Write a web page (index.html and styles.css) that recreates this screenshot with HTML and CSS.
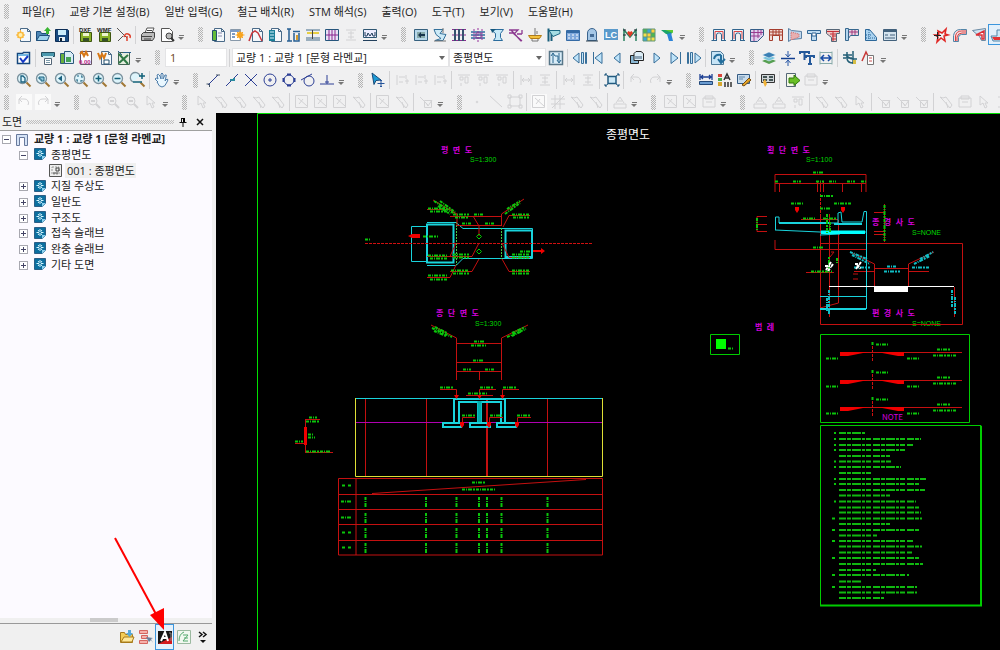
FILE: index.html
```html
<!DOCTYPE html>
<html lang="ko">
<head>
<meta charset="utf-8">
<title>종평면도</title>
<link rel="stylesheet" href="styles.css">
</head>
<body>
<svg class="defs" aria-hidden="true"><defs>
<g id="page"><path d="M4.5 1.5h7l3 3v10h-10z" fill="#f4f8fb" stroke="#4a6a88"/><path d="M11.500 1.500v3h3" fill="none" stroke="#4a6a88"/></g>
<g id="new"><use href="#page"/><circle cx="4.500" cy="8" r="3.500" fill="#ffc23a"/><path d="M4.500 3v10M0 8h9M1.500 5l6 6M7.500 5l-6 6" stroke="#f6b041"/><circle cx="4.500" cy="8" r="2" fill="#fff0b0"/></g>
<g id="open"><path d="M1.500 13.500v-9h4l1 2h6v7z" fill="#4d86b5" stroke="#1e4f7c"/><path d="M1.500 13.500l3-5h10l-2 5z" fill="#9fd3ee" stroke="#1e4f7c"/><path d="M11 7V4H9l3.500-4L16 4h-2v3z" fill="#3ab532"/></g>
<g id="save"><path d="M1.500 2.500h12l1 1v11h-13z" fill="#174a80" stroke="#0b2c55"/><path d="M4 3h8v5H4z" fill="#c9ecfb"/><path d="M5 10h6v4H5z" fill="#e8f1f6"/><path d="M6 11h2v3H6z" fill="#123"/></g>
<g id="gsave"><path d="M2.500 5.500h11v9h-11z" fill="#8bb32a" stroke="#3d5510"/><path d="M5 6h6v3H5z" fill="#eef5cf"/><path d="M5 11h6v3H5z" fill="#36502a"/></g>
<g id="dxf"><use href="#gsave"/><text x="1" y="5" class="tag">DXF</text></g>
<g id="wmf"><use href="#gsave"/><text x="0" y="5" class="tag">WMF</text></g>
<g id="cut"><path d="M1 1l10 10M2 14l5-5" stroke="#555" fill="none"/><path d="M8 10q1-4 4-3 3 1 2 4M8 10l1-2M11 9v5" stroke="#e0402c" stroke-width="1.500" fill="none"/></g>
<g id="print"><path d="M5 6l2-5h7l-2 5" fill="#fff" stroke="#555"/><path d="M1.500 7.500l2-2h11v5l-2 3h-11z" fill="#bbb" stroke="#444"/><path d="M2 9.500h10M4 12h7M7 3.500h5" stroke="#444"/></g>
<g id="preview"><path d="M2.500 1.500h8l3 3v10h-11z" fill="#fff" stroke="#555"/><circle cx="10" cy="9" r="3" fill="#bbb" stroke="#444"/><path d="M12 11l3 3" stroke="#333" stroke-width="2"/></g>
<g id="gbar"><use href="#page"/><path d="M2.500 3.500h4v10h-4z" fill="#64bc39" stroke="#244f70"/><path d="M8 6h4M8 9h4" stroke="#88a"/></g>
<g id="sunTable"><path d="M1.500 2.500h10v11h-10z" fill="#fff" stroke="#89a"/><path d="M1 4h11M3 7h3M3 10h3" stroke="#7d9cc5" stroke-width="2"/><circle cx="11" cy="8" r="3" fill="#ff9d16"/><path d="M11 3.500v9M6.500 8h9M8 5l6 6M14 5l-6 6" stroke="#f6a821"/></g>
<g id="peak"><use href="#page"/><path d="M1 14l3-8 3-2 3 2 4 8" fill="none" stroke="#c8383e" stroke-width="1.500"/></g>
<g id="stripes"><use href="#page"/><path d="M2 3h6v11H2z" fill="#1a7f98"/><path d="M3 5h4M3 8h4M3 11h4" stroke="#d6f5ff"/></g>
<g id="bracket"><path d="M3 2v12M7 4.500h7M8 6v8h5V6M1 14h5M1 2h4" fill="none" stroke="#275f93" stroke-width="1.500"/><path d="M10 8h2v5h-2z" fill="#d59c2c"/></g>
<g id="bars"><path d="M1 3h14M1 13h14M1 11h14" stroke="#456d8a"/><path d="M2 5h12v2H2z" fill="#e7ce42"/><path d="M7.500 3v9" stroke="#444"/></g>
<g id="pgrid"><path d="M1.500 2.500h13v11h-13z" fill="#e8e2f5" stroke="#26557c"/><path d="M2 8h12M8 3v10M5 3v10M11 3v10" stroke="#8a258f"/></g>
<g id="gauge"><path d="M1.500 2.500h13v8h-13z" fill="#eef" stroke="#2e5672"/><path d="M3 5v4h2l1-3 2 3 2-3 1 3h2V5M1 13.500h14" fill="none" stroke="#223f5c"/></g>
<g id="boxArrow"><path d="M1.500 2.500h13v11h-13z" fill="#b8d8ea" stroke="#36617f"/><path d="M4 5h8v6H4z" fill="#8aa"/><path d="M5 8l3-3v2h4v2H8v2z" fill="#17344c"/></g>
<g id="zed"><path d="M2 2.500h9l-3 4 6 1-3 6H3l6-2-5-4z" fill="#cdeaf7" stroke="#34719b"/><path d="M11 1v5M2 14h12" stroke="#777"/></g>
<g id="cols"><path d="M1 2.500h14M1 13.500h14M1 8h14" stroke="#8a2e91"/><path d="M4 2v12M8 2v12M12 2v12" stroke="#35506e" stroke-width="2"/></g>
<g id="hash"><path d="M1 5h14M1 8h14M1 11h14" stroke="#2f6da0" stroke-width="1.500"/><path d="M4 2v12M8 1v14M12 2v12" stroke="#96309a" stroke-dasharray="2 1"/><path d="M6 6h5v5H6z" fill="none" stroke="#873c93"/></g>
<g id="beam"><path d="M1.500 2.500h13l-3 4v4l2 3h-9l2-3v-4z" fill="#c7e9f8" stroke="#2b6c9d"/><path d="M2 2h5l-4 4z" fill="#14567a"/></g>
<g id="slash"><path d="M1 3h9l-4 4 8 7M3 3l10 11M1 6h5M14 3v4M9 7h5" fill="none" stroke="#8c3891" stroke-width="1.300"/></g>
<g id="bowl"><path d="M1.500 8.500h13l-2 3h-9z" fill="#f3c23e" stroke="#b37c14"/><path d="M8 1v8M5 12v2h6v-2M10 4v3" stroke="#777" fill="none"/></g>
<g id="flag"><path d="M2.500 1.500v13M5.500 5v9" stroke="#195f7c" stroke-width="2"/><path d="M3 3.500h11v3l-7 3z" fill="#a5dce2" stroke="#1c6884"/></g>
<g id="tbl"><path d="M1.500 3.500h13v10h-13z" fill="#7fa8dc" stroke="#356aa5"/><path d="M2 5h12" stroke="#356aa5" stroke-width="2"/><path d="M3 8h10M3 11h10" stroke="#fff" stroke-dasharray="2 2"/></g>
<g id="tomb"><path d="M3.500 13.500V6a4.500 4.500 0 0 1 9 0v7.500z" fill="#a5c7e6" stroke="#3b648e"/><path d="M6 7h4v3H6z" fill="#456c96"/><path d="M2 14h12" stroke="#345"/></g>
<g id="lc"><path d="M1 2h14v11H1z" fill="#5a9acb"/><text x="2" y="11" class="lc">LC</text></g>
<g id="heart"><path d="M2 14V3l6 7 6-7v11" fill="none" stroke="#2a8060" stroke-width="1.500"/><path d="M8 10L5 6l1.500-2L8 5l1.500-1L11 6z" fill="#e23b25"/><path d="M1 3h3M12 3h3M1 8h3M12 8h3" stroke="#223"/></g>
<g id="mosaic"><path d="M2 2h12v12H2z" fill="#f5e04b"/><path d="M2 2h4v4H2zM10 6h4v4h-4z" fill="#4bb94e"/><path d="M6 2h4v4H6zM2 10h4v4H2z" fill="#3aa7d9"/><path d="M10 2h4v4h-4zM6 6h4v4H6z" fill="#ffcf3c"/><path d="M2 6h12M2 10h12M6 2v12M10 2v12M2 2h12v12H2z" stroke="#5e9676" fill="none"/></g>
<g id="funnel"><path d="M1 3h12l-2 5-5-1z" fill="#1aa26a"/><path d="M5 3h8v3z" fill="#5ccb34"/><path d="M7 7l4-1 2 8H9z" fill="#2b83d8"/></g>
<g id="arch"><path d="M1.500 13.500h-1M2.500 13.500V2.500h11v11h-3V8q0-2-2-2h-1q-2 0-2 2v5.500z" fill="#ebf4fa" stroke="#31658e"/><path d="M4 12V4.500h8V12" fill="none" stroke="#dc4544"/><path d="M1 13.500h5M10 13.500h5" stroke="#31658e"/></g>
<g id="qgrid"><path d="M1.500 14.500v-12h13v6l-6 6z" fill="#dfd1ee" stroke="#355d88"/><path d="M2 5.500h12M2 9h9M5 3v11M9 3v8M12 3v5" stroke="#9a3a8f"/></g>
<g id="hgrid"><path d="M1.500 2.500h13v11h-3v-5h-7v5h-3z" fill="#f1d8d3" stroke="#a53c2d"/><path d="M2 5h12M5 3v5M8 3v5M11 3v5M2 8h12" stroke="#a53c2d"/></g>
<g id="flare"><path d="M1.500 1.500l3 2 10 1v7l-10 1-3 2z" fill="#c0d8ee" stroke="#597fa3"/><path d="M4 5l8 2v3l-8 3z" fill="#e8afb0" stroke="#d06a6a" stroke-dasharray="1 1"/></g>
<g id="tee"><path d="M1.500 3.500h13v3h-4v7h-5v-7h-4z" fill="#bfdcf2" stroke="#326796"/><path d="M6 6h4v3H6z" fill="#fff" stroke="#326796"/></g>
<g id="rtee"><path d="M1.500 2.500h13v4h-3v8h-5v-4l-5-4z" fill="#edc7c7" stroke="#567"/><path d="M2 4.500h12M5 7h6M7 9h4M7 12h4M8 4v10" stroke="#c42f36"/></g>
<g id="fgrid"><path d="M1.500 1.500h3v12h-3z" fill="#b4d6ef" stroke="#36678e"/><path d="M4.500 2.500h10v6h-8l-2 3z" fill="#e6d6e5" stroke="#36678e"/><path d="M5 5h9M8 3v5M11 3v5" stroke="#a1397a"/></g>
<g id="slope"><path d="M2.500 2.500h4l7 8v3h-11z" fill="#a9d2f0" stroke="#2b6799"/><path d="M3 8h6M3 11h10M6 3v10" stroke="#2b6799" stroke-dasharray="1 1"/></g>
<g id="panel"><path d="M1.500 2.500h13v11h-13z" fill="#d4e3ee" stroke="#42617c"/><path d="M2 4h12" stroke="#42617c" stroke-width="2"/><path d="M3 8h3M8 8h5M3 11h10" stroke="#42617c"/></g>
<g id="star"><path d="M5 4l4 2 4-4-1 5 3 1-4 1 1 5-4-3-4 4 1-5-3-2 4 0z" fill="none" stroke="#e02623" stroke-width="1.500"/><path d="M1 8.500h7M4.500 5v7" stroke="#222"/></g>
<g id="curve"><path d="M1.500 14.500v-6q1-6 7-6h6v5h-5q-3 0-3 3v4z" fill="#f4dfe0" stroke="#5385a8"/><path d="M3.500 14V9q1-5 6-5h5M5 14v-4q1-4 5-4h4" fill="none" stroke="#db4245"/></g>
<g id="wedge"><path d="M1.500 3.500l13-2v12h-4l-2-4z" fill="#cfe5f4" stroke="#6b8aa4"/><path d="M5 8l8-4v8h-2V8z" fill="#fff" stroke="#de3037" stroke-width="1.500"/></g>
<g id="boat"><path d="M1 9h6V3h5v6h4v5H3z" fill="#cee8f8" stroke="#5385a8"/><path d="M2 10h14v3H4z" fill="#e23436"/></g>
<g id="check"><path d="M1.500 3.500h5l1-1h6v11h-12z" fill="#fff" stroke="#16477d" stroke-width="1.500"/><path d="M2 4h11v2H2z" fill="#73b7e2"/><path d="M4 8l3 4 5-6" fill="none" stroke="#1638c4" stroke-width="2"/></g>
<g id="plot"><path d="M1.500 2.500h13v4h-13z" fill="#4a98ad" stroke="#234f60"/><path d="M3 6h10v2H3z" fill="#cfeaf0"/><path d="M4.500 8.500h7v6h-7z" fill="#fff" stroke="#567"/><path d="M6 10.500h4M6 12.500h4" stroke="#7a99a9"/></g>
<g id="pages"><path d="M1.500 3.500h8v10h-8z" fill="#69b13e" stroke="#2b587b"/><path d="M5.500 1.500h6l3 3v9h-9z" fill="#d9edf7" stroke="#2b587b"/><path d="M7 7h5v5H7z" fill="#44a256"/></g>
<g id="num"><path d="M2.500 1.500h11v13h-11z" fill="#fff" stroke="#656"/><path d="M2 4l2-2 2 4 2-4 2 4" fill="none" stroke="#d87714" stroke-width="2"/><text x="1" y="14" class="pk">0.00</text></g>
<g id="wpage"><use href="#page"/><path d="M1 3l2 5 2-4 2 4 2-5" fill="none" stroke="#d87714" stroke-width="2"/><path d="M7 10h5v4H7z" fill="#fff" stroke="#24506f"/></g>
<g id="xl"><path d="M2.500 2.500h11v12h-11z" fill="#e6eee0" stroke="#465"/><path d="M3 4l9 10M12 5l-9 8" stroke="#2f7945" stroke-width="2"/><path d="M7 2.500h8M2 1l4 4" fill="none" stroke="#2d628c"/></g>
<g id="swap"><path d="M1.500 1.500h13v13h-13z" fill="#d9edf8" stroke="#577688" stroke-width="1.500"/><path d="M5 13V4M3 6l2-3 2 3M11 3v9M9 10l2 3 2-3M7 6h3v4" stroke="#28658d" fill="none"/></g>
<path id="p1" d="M1 8l6-5v10zM9.500 2.500h2v11h-2zM13.500 2.500h1v11h-1z"/><path id="p2" d="M4 8l7-5.500v11zM2.500 2v12"/><path id="p3" d="M4 8l6-5v10z"/><path id="n3" d="M12 8L6 3v10z"/><path id="n2" d="M11 8L4 2.500v11zM13.500 2v12"/><path id="n1" d="M15 8L9 3v10zM1.500 2.500h1v11h-1zM4.500 2.500h2v11h-2z"/>
<g id="home"><path d="M1.500 5.500h8v8h-8z" fill="#8ab7d3" stroke="#222"/><path d="M5 3.500l2-2h5l2.500 2v7h-9.500z" fill="#ddeef7" stroke="#222"/><path d="M6 6h7v3H6z" fill="#8da5b7"/></g>
<g id="rot"><path d="M1.500 1.500h9l3 3v10h-12z" fill="#c6e4f6" stroke="#4b7796"/><path d="M4 9q1-5 7-4M11 5v7M8 9l3 4 4-4" fill="none" stroke="#236e9c" stroke-width="2"/></g>
<g id="layers"><path d="M1 11l7-3 7 3-7 3z" fill="#569f52"/><path d="M1 8l7-3 7 3-7 3z" fill="#79c3dc" stroke="#fff" stroke-width=".5"/><path d="M1 5l7-3 7 3-7 3z" fill="#3b80b5" stroke="#fff" stroke-width=".5"/></g>
<g id="mid"><path d="M1 8.500h14" stroke="#123f90" stroke-width="1.500"/><path d="M8 1v5M8 16v-5M5.500 4L8 7l2.500-3M5.500 13L8 10l2.500 3" stroke="#2756a5" fill="none"/></g>
<g id="tt"><path d="M1 4V2h9v2M5.500 2v8M7 8V6h8v2M11 6v8M9 14h4" stroke="#24599b" fill="none" stroke-width="2"/></g>
<g id="dim"><path d="M2 1.500v13M14 1.500v13M2 2.500h12M2 13.500h12" stroke="#8aa"/><path d="M3 8h10M6 5L3 8l3 3M10 5l3 3-3 3" fill="none" stroke="#174ba5" stroke-width="1.500"/></g>
<g id="leaf"><path d="M1 5h9M1 8h9M5 2v6M11 1v13M11 9q-5-1-7-4M11 13q-5 0-6-4M11 9h4" fill="none" stroke="#245f77" stroke-width="1.500"/><path d="M11 10h3v4h-3z" fill="#d6bd45"/></g>
<g id="redn"><path d="M1 11L5 2l3 6" fill="none" stroke="#c83836" stroke-width="1.500"/><path d="M6.500 5.500h6v9h-6z" fill="#fff" stroke="#777"/><path d="M8 8h3M8 11h3" stroke="#c55"/></g>
<g id="lens"><circle cx="6.500" cy="6.500" r="5" fill="#ddf4fb" stroke="#7b929e" stroke-width="1.300"/><path d="M10.500 10.500l4 4" stroke="#a07735" stroke-width="2"/></g>
<g id="z1"><use href="#lens"/><path d="M5 4h2l2 2v4H5z" fill="none" stroke="#1b617f" stroke-width="1.300"/></g>
<g id="z2"><use href="#lens"/><path d="M4 5h5v4H6v-2H4z" fill="#8dc5da" stroke="#1b617f"/></g>
<g id="z3"><use href="#lens"/><path d="M4 6.500l4-3v6z" fill="#1b617f"/></g>
<g id="z4"><use href="#lens"/><path d="M4 4h2M8 4h1v2M9 8v1H7M5 9H4V7" stroke="#1b617f" fill="none"/></g>
<g id="z5"><use href="#lens"/><path d="M3.500 6.500h6M6.500 3.500v6" stroke="#126179" stroke-width="1.500"/></g>
<g id="z6"><use href="#lens"/><path d="M3.500 6.500h6" stroke="#126179" stroke-width="1.500"/></g>
<g id="z7"><path d="M3 10a5 5 0 1 1 7-6" fill="#ddf4fb" stroke="#7b929e" stroke-width="1.300"/><path d="M10.500 10.500l4 4" stroke="#a07735" stroke-width="2"/><path d="M3 10h9M9 4h6M12 1v6" stroke="#126179" stroke-width="1.500"/></g>
<g id="hand"><path d="M4 10L1 7q1-2 3 0L3 3q1-2 3 1l1 3V2q1-2 2 0v5l2-4q2-1 1 2l-1 4 2-2q2 0 0 3-2 5-5 5-3 0-5-5z" fill="#e9f7ff" stroke="#4c7ba8"/></g>
<g id="l1"><path d="M3 13L13 3"/><path d="M1.500 12h3v3M11 3h4" stroke="#456"/></g><g id="l2"><path d="M2 14L14 2"/><path d="M6 8h4v-2" stroke="#2a8aa0" stroke-width="2"/></g><path id="l3" d="M2 2l12 12M14 2L2 14"/><g id="l4"><circle cx="8" cy="8" r="6"/><path d="M6 8h4M8 6v4"/></g><g id="l5"><circle cx="8" cy="8" r="5"/><path d="M6 2.500h4M6 13.500h4M2.500 6v4M13.500 6v4" stroke-width="2"/></g><g id="l6"><circle cx="9" cy="9" r="5"/><path d="M1 8l11-6"/></g><path id="l7" d="M1 12h14M8 3v9M6 10h4"/>
<g id="ptr"><path d="M2 1l9 7-5 .5-2 4z" fill="#1e9bd5" stroke="#1a4b79"/><path d="M11 8v7M7.500 11.500h7M10 9l1-1 1 1M10 14l1 1 1-1" stroke="#24549a" fill="none"/></g>
<g id="fit"><path d="M4 4.500h8v7H4z" fill="#cde9f7" stroke="#235b80" stroke-width="1.500"/><path d="M1 2l3 2M15 2l-3 2M1 14l3-2M15 14l-3-2M1 4V2h2M13 2h2v2M1 12v2h2M13 14h2v-2" fill="none" stroke="#235b80"/></g>
<g id="ruler"><path d="M2 2v6M14 2v6M2 5h12M5 3L3 5l2 2M11 3l2 2-2 2" fill="none" stroke="#1c3f93" stroke-width="1.300"/><path d="M1.500 9.500h13v3h-13z" fill="#6a9bd0" stroke="#23497a"/></g>
<g id="legend"><path d="M1 2h4v3H1z" fill="#d8463b"/><path d="M1 6h4v3H1z" fill="#46a84c"/><path d="M1 10h4v4H1z" fill="#d7a62d"/><path d="M7 8l3-6 3 6M8 6h4M8 10v5M11 10v5M14 10v5" stroke="#333" fill="none" stroke-width="1.500"/></g>
<g id="edit"><path d="M1.500 2.500h12v9h-12z" fill="#c8dced" stroke="#345b84"/><path d="M6 13l7-7 2 2-7 6z" fill="#e4a62a" stroke="#774e15"/><path d="M3 5h6M3 7h4" stroke="#6488aa"/></g>
<g id="sheet"><path d="M1.500 2.500h13v8h-13z" fill="#cfd4d8" stroke="#333"/><path d="M3 5h4M9 5h4M3 8h4M9 8h4" stroke="#455" stroke-width="2"/><path d="M3 10l2-3 2 5-2 3z" fill="#f0b33a"/></g>
<g id="exit"><path d="M2.500 1.500h9v13h-9z" fill="#f3f8e7" stroke="#567"/><path d="M5 6h5V3l6 5.500-6 5V11H5z" fill="#68bf25" stroke="#32780d"/></g>
<path id="d1" d="M3 3v10M5 5h6M5 10h4M12 3v4M11 9h4M13 7v5"/><path id="d2" d="M2 3h12M4 5h3v3H4zM9 5h3v6H9zM5 11v3"/><path id="d3" d="M3 3v10M13 3v10M4 8h8M6 6L4 8l2 2M10 6l2 2-2 2"/><path id="d4" d="M3 3h10M3 13h10M8 4v8M5 6h6M5 10h6"/><path id="d5" d="M3 10V5h5a4 4 0 0 1 4 6M3 5l3-3M3 5l3 3"/><path id="d6" d="M13 10V5H8a4 4 0 0 0-4 6M13 5l-3-3M13 5l-3 3"/><g id="d7"><circle cx="7" cy="7" r="4"/><path d="M10 10l4 4M5 7h4" stroke-width="2"/></g><path id="d8" d="M4 2v9l3-2 2 5 2-1-2-4h3z"/><path id="d9" d="M2 3l3 1 3-1 6 8-2 3-7-8zM8 8l2 6"/><path id="d10" d="M1.500 1.500h12v12h-12zM4 4l9 8M5 10l4-5"/><path id="d11" d="M3 3h10v9H3zM1 1h3v3H1zM12 1h3v3h-3zM1 11h3v3H1zM12 11h3v3h-3z"/><path id="d12" d="M1 5h14M1 10h14M5 1v14M10 1v14M2 14L14 2"/><path id="d13" d="M2 10h12v4H2zM4 9l4-6 4 6M6 7h4"/><path id="d14" d="M2 3l8 8M6.500 6.500h7v7h-7zM8 9l2 3 4-6"/><circle id="d15" cx="8" cy="8" r=".8"/><path id="d16" d="M2 2l12 11"/><path id="d17" d="M2 4h12v9H2zM4 2h8v3H4zM5 8h6"/>
<g id="cad"><path d="M1.500 1.500h11v8l-3 3h-8z" fill="#0b6f9f" stroke="#2d5f86"/><path d="M9 13v-4h4z" fill="#8cd0ee"/><path d="M7 3v7M3.500 6.500h7M5 4l4 5M9 4L5 9" stroke="#d8f7ff"/><circle cx="7" cy="6.500" r="1" fill="#0b6f9f"/></g>
<g id="bridge"><path d="M1.500 13.500v-11h11v11h-3v-8h-5v8z" fill="#d5e2f6" stroke="#68799c"/></g>
<g id="doc"><path d="M1.500 1.500h12v12h-12z" fill="#eee" stroke="#555"/><path d="M4 4h7v7H4z" fill="none" stroke="#999" stroke-dasharray="2 1"/><path d="M8 5h3v3H8zM5 10h5" fill="none" stroke="#444"/></g>
<g id="fold"><path d="M1.500 13.500v-10h4l1 2h7v8z" fill="#f4cd55" stroke="#a77a1b"/><path d="M2 13l3-5h10l-2 5z" fill="#ffe99a" stroke="#a77a1b"/><path d="M9 1h3v3h2l-3.500 4L7 4h2z" fill="#57a9d8"/></g>
<g id="rows"><path d="M1.500 1.500h8v3h-8zM3.500 6.500h6v3h-6zM1.500 11.500h8v3h-8z" fill="#f6b0aa" stroke="#d4655f"/><path d="M8 8l7 1-2 1 2 4-2-3-2 2z" fill="#68819d"/></g>
<g id="acad"><path d="M1 2h14v13H1z" fill="#151515"/><path d="M1 15l14-7v7z" fill="#d21b20"/><path d="M4 12L8 3l3 9M6 9h4" fill="none" stroke="#fff" stroke-width="2"/><path d="M12 4h2v8" fill="none" stroke="#888"/></g>
<g id="excel"><path d="M1.500 1.500h13v13h-13z" fill="#f2f8f1" stroke="#9bb9a0"/><path d="M7 6h5l-5 6h5M8 9h4M3 12q0-7 5-9" fill="none" stroke="#55a96f"/></g>
</defs></svg>

<main class="app">
<header class="bars">
<nav class="menu" aria-label="메뉴"><i class="grip"></i><button>파일(F)</button><button>교량 기본 설정(B)</button><button>일반 입력(G)</button><button>철근 배치(R)</button><button>STM 해석(S)</button><button>출력(O)</button><button>도구(T)</button><button>보기(V)</button><button>도움말(H)</button></nav>

<div class="row">
<div class="set"><i class="grip"></i><button class="b" aria-label="새 파일"><svg><use href="#new"/></svg></button><button class="b" aria-label="열기"><svg><use href="#open"/></svg></button><button class="b" aria-label="저장"><svg><use href="#save"/></svg></button><i class="sep"></i><button class="b" aria-label="DXF 저장"><svg><use href="#dxf"/></svg></button><button class="b" aria-label="WMF 저장"><svg><use href="#wmf"/></svg></button><button class="b" aria-label="자르기"><svg><use href="#cut"/></svg></button><i class="sep"></i><button class="b" aria-label="인쇄"><svg><use href="#print"/></svg></button><button class="b" aria-label="미리보기"><svg><use href="#preview"/></svg></button><button class="more" aria-label="더보기"></button></div>
<div class="set"><i class="grip"></i><button class="b"><svg><use href="#gbar"/></svg></button><button class="b"><svg><use href="#sunTable"/></svg></button><button class="b"><svg><use href="#peak"/></svg></button><button class="b"><svg><use href="#stripes"/></svg></button><button class="b"><svg><use href="#bracket"/></svg></button><button class="b"><svg><use href="#bars"/></svg></button><button class="b"><svg><use href="#pgrid"/></svg></button><button class="b" disabled><svg><use href="#d4"/></svg></button><button class="b"><svg><use href="#gauge"/></svg></button><button class="more" aria-label="더보기"></button></div>
<div class="set"><i class="grip"></i><button class="b"><svg><use href="#boxArrow"/></svg></button><button class="b"><svg><use href="#zed"/></svg></button><button class="b"><svg><use href="#cols"/></svg></button><button class="b"><svg><use href="#hash"/></svg></button><button class="b"><svg><use href="#beam"/></svg></button><button class="b"><svg><use href="#slash"/></svg></button><button class="b"><svg><use href="#bowl"/></svg></button><button class="b"><svg><use href="#flag"/></svg></button><button class="b"><svg><use href="#tbl"/></svg></button><button class="b"><svg><use href="#tomb"/></svg></button><button class="b"><svg><use href="#lc"/></svg></button><button class="b"><svg><use href="#heart"/></svg></button><button class="b"><svg><use href="#mosaic"/></svg></button><button class="b"><svg><use href="#funnel"/></svg></button><button class="more" aria-label="더보기"></button></div>
<div class="set"><i class="grip"></i><button class="b"><svg><use href="#arch"/></svg></button><button class="b"><svg><use href="#arch"/></svg></button><button class="b"><svg><use href="#qgrid"/></svg></button><button class="b"><svg><use href="#hgrid"/></svg></button><button class="b"><svg><use href="#flare"/></svg></button><button class="b"><svg><use href="#tee"/></svg></button><button class="b"><svg><use href="#rtee"/></svg></button><button class="b"><svg><use href="#fgrid"/></svg></button><button class="b"><svg><use href="#slope"/></svg></button><button class="b"><svg><use href="#panel"/></svg></button><button class="more" aria-label="더보기"></button></div>
<div class="set"><i class="grip"></i><button class="b"><svg><use href="#star"/></svg></button><button class="b"><svg><use href="#curve"/></svg></button><button class="b"><svg><use href="#wedge"/></svg></button><button class="b on"><svg><use href="#boat"/></svg></button></div>
</div>

<div class="row">
<div class="set"><i class="grip"></i><button class="b"><svg><use href="#check"/></svg></button><i class="sep"></i><button class="b"><svg><use href="#plot"/></svg></button><button class="b"><svg><use href="#pages"/></svg></button><button class="b"><svg><use href="#num"/></svg></button><button class="b"><svg><use href="#wpage"/></svg></button><button class="b"><svg><use href="#xl"/></svg></button><button class="more" aria-label="더보기"></button></div>
<div class="set"><i class="grip"></i><input class="num" aria-label="번호" value="1"><i class="sep"></i><span class="drop wide"><select aria-label="교량"><option>교량 1 : 교량 1 [문형 라멘교]</option></select></span><span class="drop"><select aria-label="도면"><option>종평면도</option></select></span><button class="b"><svg><use href="#swap"/></svg></button><i class="sep"></i><button class="b"><svg class="nav"><use href="#p1"/></svg></button><button class="b"><svg class="nav"><use href="#p2"/></svg></button><button class="b"><svg class="nav"><use href="#p3"/></svg></button><button class="b"><svg><use href="#home"/></svg></button><button class="b"><svg class="nav"><use href="#n3"/></svg></button><button class="b"><svg class="nav"><use href="#n2"/></svg></button><button class="b"><svg class="nav"><use href="#n1"/></svg></button><i class="sep"></i><button class="b"><svg><use href="#rot"/></svg></button><button class="more" aria-label="더보기"></button></div>
<div class="set"><i class="grip"></i><button class="b"><svg><use href="#layers"/></svg></button><button class="b"><svg><use href="#mid"/></svg></button><button class="b"><svg><use href="#tt"/></svg></button><button class="b"><svg><use href="#dim"/></svg></button><i class="sep"></i><button class="b"><svg><use href="#leaf"/></svg></button><button class="b"><svg><use href="#redn"/></svg></button><button class="more" aria-label="더보기"></button></div>
</div>

<div class="row low">
<div class="set"><i class="grip"></i><button class="b"><svg><use href="#z1"/></svg></button><button class="b"><svg><use href="#z2"/></svg></button><button class="b"><svg><use href="#z3"/></svg></button><button class="b"><svg><use href="#z4"/></svg></button><button class="b"><svg><use href="#z5"/></svg></button><button class="b"><svg><use href="#z6"/></svg></button><button class="b"><svg><use href="#z7"/></svg></button><i class="sep"></i><button class="b"><svg><use href="#hand"/></svg></button><button class="more" aria-label="더보기"></button></div>
<div class="set"><i class="grip"></i><button class="b"><svg class="snap"><use href="#l1"/></svg></button><button class="b"><svg class="snap"><use href="#l2"/></svg></button><button class="b"><svg class="snap"><use href="#l3"/></svg></button><button class="b"><svg class="snap"><use href="#l4"/></svg></button><button class="b"><svg class="snap"><use href="#l5"/></svg></button><button class="b"><svg class="snap"><use href="#l6"/></svg></button><button class="b"><svg class="snap"><use href="#l7"/></svg></button><button class="more" aria-label="더보기"></button></div>
<div class="set"><i class="grip"></i><button class="b"><svg><use href="#ptr"/></svg></button><i class="sep"></i><button class="b" disabled><svg><use href="#d1"/></svg></button><button class="b" disabled><svg><use href="#d1"/></svg></button><button class="b" disabled><svg><use href="#d1"/></svg></button><i class="sep"></i><button class="b" disabled><svg><use href="#d2"/></svg></button><button class="b" disabled><svg><use href="#d2"/></svg></button><button class="b" disabled><svg><use href="#d2"/></svg></button><i class="sep"></i><button class="b" disabled><svg><use href="#d3"/></svg></button><button class="b" disabled><svg><use href="#d4"/></svg></button><i class="sep"></i><button class="b" disabled><svg><use href="#d3"/></svg></button><button class="b" disabled><svg><use href="#d4"/></svg></button><i class="sep"></i><button class="b"><svg><use href="#fit"/></svg></button><i class="sep"></i><button class="b" disabled><svg><use href="#d5"/></svg></button><button class="b" disabled><svg><use href="#d6"/></svg></button><button class="more" aria-label="더보기"></button></div>
<div class="set"><i class="grip"></i><button class="b"><svg><use href="#ruler"/></svg></button><button class="b"><svg><use href="#legend"/></svg></button><button class="b"><svg><use href="#edit"/></svg></button><i class="sep"></i><button class="b"><svg><use href="#sheet"/></svg></button><i class="sep"></i><button class="b"><svg><use href="#exit"/></svg></button><button class="b" disabled><svg><use href="#d17"/></svg></button><button class="more" aria-label="더보기"></button></div>
</div>

<div class="row low">
<div class="set"><i class="grip"></i><button class="b pale" disabled><svg><use href="#d5"/></svg></button><button class="b pale" disabled><svg><use href="#d6"/></svg></button><button class="more" aria-label="더보기"></button></div>
<div class="set"><i class="grip"></i><button class="b" disabled><svg><use href="#d7"/></svg></button><button class="b" disabled><svg><use href="#d7"/></svg></button><button class="b" disabled><svg><use href="#d7"/></svg></button><button class="b" disabled><svg><use href="#d8"/></svg></button><button class="more" aria-label="더보기"></button></div>
<div class="set"><i class="grip"></i><button class="b" disabled><svg><use href="#d8"/></svg></button><button class="b" disabled><svg><use href="#d9"/></svg></button><button class="b" disabled><svg><use href="#d9"/></svg></button><button class="b" disabled><svg><use href="#d9"/></svg></button><button class="b" disabled><svg><use href="#d9"/></svg></button><i class="sep"></i><button class="b" disabled><svg><use href="#d10"/></svg></button><button class="b" disabled><svg><use href="#d10"/></svg></button><button class="b" disabled><svg><use href="#d10"/></svg></button><button class="b" disabled><svg><use href="#d9"/></svg></button><i class="sep"></i><button class="b" disabled><svg><use href="#d10"/></svg></button><button class="b" disabled><svg><use href="#d9"/></svg></button><i class="sep"></i><button class="b" disabled><svg><use href="#d14"/></svg></button><button class="more" aria-label="더보기"></button></div>
<div class="set"><i class="grip"></i><button class="b" disabled><svg><use href="#d15"/></svg></button><button class="b" disabled><svg><use href="#d16"/></svg></button><button class="b" disabled><svg><use href="#d11"/></svg></button><i class="sep"></i><button class="b pale" disabled><svg><use href="#d10"/></svg></button><button class="b" disabled><svg><use href="#d12"/></svg></button><button class="b" disabled><svg><use href="#d9"/></svg></button><button class="b" disabled><svg><use href="#d9"/></svg></button><i class="sep"></i><button class="b" disabled><svg><use href="#d13"/></svg></button><button class="more" aria-label="더보기"></button></div>
<div class="set"><i class="grip"></i><button class="b" disabled><svg><use href="#d10"/></svg></button><button class="b" disabled><svg><use href="#d10"/></svg></button><button class="b" disabled><svg><use href="#d17"/></svg></button><button class="more" aria-label="더보기"></button></div>
<div class="set"><i class="grip"></i><button class="b" disabled><svg><use href="#d13"/></svg></button><button class="b" disabled><svg><use href="#d13"/></svg></button><button class="b" disabled><svg><use href="#d2"/></svg></button><i class="sep"></i><button class="b" disabled><svg><use href="#d9"/></svg></button><button class="b" disabled><svg><use href="#d9"/></svg></button><button class="b" disabled><svg><use href="#d8"/></svg></button><i class="sep"></i><button class="b" disabled><svg><use href="#d14"/></svg></button><button class="b" disabled><svg><use href="#d14"/></svg></button><button class="b" disabled><svg><use href="#d14"/></svg></button><i class="sep"></i><button class="b" disabled><svg><use href="#d9"/></svg></button><button class="b" disabled><svg><use href="#d17"/></svg></button><button class="b" disabled><svg><use href="#d8"/></svg></button><button class="b" disabled><svg><use href="#d4"/></svg></button></div>
</div>
</header>

<div class="work">
<aside class="side">
<div class="side-head"><h2>도면</h2><i class="dots"></i><button aria-label="고정"><svg width="10" height="10"><path d="M3.500 1v4M6.500 1v4M3 1.500h4M1.500 5.500h7M5 6v4" stroke="#111" fill="none"/><path d="M5 1h2v4H5z"/></svg></button><button aria-label="닫기"><svg width="8" height="8"><path d="M1 1l6 6M7 1L1 7" stroke="#111" stroke-width="1.500"/></svg></button></div>
<ul class="tree">
<li class="root"><button class="x minus" aria-label="접기"></button><svg><use href="#bridge"/></svg><span>교량 1 : 교량 1 [문형 라멘교]</span></li>
<li class="one"><button class="x minus" aria-label="접기"></button><svg><use href="#cad"/></svg><span>종평면도</span></li>
<li class="two"><svg><use href="#doc"/></svg><span>001 : 종평면도</span></li>
<li class="one"><button class="x plus" aria-label="펼치기"></button><svg><use href="#cad"/></svg><span>지질 주상도</span></li>
<li class="one"><button class="x plus" aria-label="펼치기"></button><svg><use href="#cad"/></svg><span>일반도</span></li>
<li class="one"><button class="x plus" aria-label="펼치기"></button><svg><use href="#cad"/></svg><span>구조도</span></li>
<li class="one"><button class="x plus" aria-label="펼치기"></button><svg><use href="#cad"/></svg><span>접속 슬래브</span></li>
<li class="one"><button class="x plus" aria-label="펼치기"></button><svg><use href="#cad"/></svg><span>완충 슬래브</span></li>
<li class="one"><button class="x plus" aria-label="펼치기"></button><svg><use href="#cad"/></svg><span>기타 도면</span></li>
</ul>
<div class="split"><i></i></div>
<div class="side-foot"><button class="f" aria-label="폴더"><svg><use href="#fold"/></svg></button><button class="f" aria-label="목록"><svg><use href="#rows"/></svg></button><button class="f on" aria-label="CAD"><svg><use href="#acad"/></svg></button><button class="f" aria-label="Excel"><svg><use href="#excel"/></svg></button><button class="f" aria-label="더보기"><svg><path d="M4 3l3 2.500L4 8M8 3l3 2.500L8 8" fill="none" stroke="#111" stroke-width="1.500"/><path d="M5 11h6l-3 3z" fill="#111"/></svg></button></div>
</aside>

<section class="canvas" aria-label="종평면도">
<svg class="drawing" viewBox="216 113 784 537" preserveAspectRatio="xMinYMin meet">
<path d="M1000 113.500H257.500V650" class="frame"/>
<text x="606" y="139" class="title">종평면도</text>
<g class="mg"><text x="441" y="153">평  면  도</text><text x="436" y="316">종  단  면  도</text><text x="767" y="153">횡  단  면  도</text><text x="872" y="225">종  경  사  도</text><text x="872" y="316">편  경  사  도</text><text x="755" y="330">범  례</text></g>
<text x="882" y="420" class="nt">NOTE</text>
<g class="sc"><text x="470" y="162">S=1:300</text><text x="475" y="326">S=1:300</text><text x="806" y="162">S=1:100</text><text x="912" y="235">S=NONE</text><text x="912" y="326">S=NONE</text></g>

<!-- plan -->
<g class="cy"><path d="M427 226.500H411.500V261.500H427M427 222.500H456L463 228.500H532.500V258.500H463L456 265.500H427M501 258.500H532"/><path d="M427 224.500H453.500V262.500H427zM505.500 230.500H532V257H505.500z" class="w2"/></g>
<path class="gd" d="M456.500 222V265M501.500 228V259"/>
<path class="rdash" d="M365 243.500H593"/>
<path class="rd" d="M433 200L457 214V226M457 216.500H501M457 225.500H501M524 199L501.500 214V226M473 216L479 226V236M427 209.500H450L459 217M450 216.500H459M530 215.500H509L503 227M427 256.500H450L456 243M450 256.500H472L479 243M427 277.500H450L456 265M450 271.500H472L479 259M530 271.500H509L502 259M530 257.500H509L502 243"/>
<path class="rf" d="M408 236l4-2h8v4h-8zM533 250h8v-2l4 3-4 3v-2h-8z"/>
<path class="gr" d="M479 234l2.500 2.500-2.500 2.500-2.500-2.500zM479 249l2.500 2.500-2.500 2.500-2.500-2.500z"/>
<path class="s" d="M365 239.500H371M428 208.500H448M430 211.500H448M453 214.500H469M455 217.500H469M474 214.500H483M462 223.500H471M485 223.500H494M512 214.500H529M513 217.500H529M423 236.500H438M520 251.500H530M428 255.500H448M430 258.500H448M453 254.500H469M453 257.500H469M512 254.500H529M512 257.500H529M428 275.500H448M430 279.500H448M451 270.500H469M453 273.500H469M512 270.500H529M512 273.500H529M434 201L453 213M440 201L455 212M438 206L450 214M505 214L520 203M507 209L520 201"/>

<!-- profile -->
<path class="rd" d="M431 325L456.500 338V380M528 325L501.500 338V380M456 343.500H501M456 362.500H501M456 371.500H501M479.500 371V380M440 389.500H456.500V397M496 389.500H479.500V397M519 389.500H502.500V397M466 395.500H493M365.500 398V476M426.500 398V476M547.500 398V476"/>
<path class="rd w2" d="M487 398V476"/>
<path d="M356 422.500H602" stroke="#b000b0"/>
<path d="M355.500 398V476.500H602.500V398" fill="none" stroke="#dfdf35"/>
<g class="cy"><path d="M356 398.500H602"/><path class="w2" d="M454 422V399H505V422M459 422V402H501V422M478 402V422M481 402V422M443 423H461V427H443zM470 423H490V427H470zM497 423H516V427H497z"/></g>
<path d="M477.500 401h4v21h-4z" fill="#0aa"/>
<path class="rd" d="M475 417.500H462.500V425M503 417.500H489.500V425M531 417.500H517.500V425M305.500 419.500V452.500M305 419.500H320M295 443.500H305M305 452.500H333"/>
<path class="rf" d="M304 427h3v18h-3zM454 395h5l-2.500 4zM477 395h5l-2.500 4zM500 395h5l-2.500 4zM460 422h4v3l-2 3-2-3zM487 422h4v3l-2 3-2-3zM515 422h4v3l-2 3-2-3z"/>
<path class="s" d="M432 328L452 337M435 327L447 333M434 331L446 336M507 337L526 329M512 333L525 327M512 336L522 331M474 341.500H484M471 345.500H486M473 360.500H483M463 369.500H471M485 369.500H494M440 387.500H454M480 387.500H494M503 387.500H517M468 393.500H487M462 415.500H475M490 415.500H502M517 415.500H530M309 417.500H317M306 421.500H319M308 434.500H314M308 437.500H315M295 441.500H303M306 451.500H331M472 482.500H485M462 489.500H495M342 485.500H345M348 485.500H351M341 501.500H351M341 517.500H351M342 532.500H345M348 532.500H351M342 547.500H345M348 547.500H351"/>
<path class="tb" d="M338.500 478.500H602.500V555H338.500zM338 494.500H602M338 509.500H602M338 524.500H602M338 540.500H602M356 478V555M372 493.500L586 479.500"/>
<path class="s" d="M365.500 497v10M365.500 513v10M365.500 528v10M365.500 543v10M426 497v10M426 513v10M426 528v10M426 543v10M456.500 497v10M456.500 513v10M456.500 528v10M456.500 543v10M479 497v10M479 513v10M479 528v10M479 543v10M487 497v10M487 513v10M487 528v10M487 543v10M501.500 497v10M501.500 513v10M501.500 528v10M501.500 543v10M547.500 497v10M547.500 513v10M547.500 528v10M547.500 543v10"/>

<!-- cross section -->
<path class="rd" d="M775 192V174.500H866V192M775 183.500H866M779.500 183V192M817.500 182V192M820.500 182V192M823.500 182V192M842.500 183V192M861.500 183V192M767 216.500H757V231.500H767M757 224.500H767M775 240V249.500H866M801 219.500H838M829.500 214V317M838.500 220V303L820 308M806 272.500H834M884.500 204V242M874 212.500H884M874 231.500H884M874 234.500H884M820.500 215V243M820 243.500H962.500V324.500H820.500V243M874.500 287V264L850 252M908.500 287V264L934 252M874 268.500H908M854 271.500H874M908 271.500H929M954.500 287V317M831 252h3l-4 5M853 274h5M853 279h5"/>
<path class="rdash" d="M820.500 194V215"/>
<path class="rf" d="M795 207h4v3l-2 3-2-3zM841 207h4v3l-2 3-2-3z"/>
<g class="cy"><path d="M775.500 230V217H779V223L838 223V213L841 212L842 222H862L864 211.500H866.500V309M775 230L820 232H866M820 296.500H866M820 235L840 234"/><path class="w2" d="M779 223H829M834 224H862M820 309H866"/></g>
<path d="M821 230.500h44v3.500h-44z" fill="#0ff"/>
<path d="M829 286.500H954" stroke="#fff"/><path d="M874 287h34v5h-34z" fill="#fff"/>
<path class="s" d="M813 172.500H823M775 181.500H779M793 181.500H801M816 181.500H824M829 181.500H836M847 181.500H855M861 181.500H866M820 196H833M820 208.500H831M791 203.500H803M834 203.500H851M803 218.500H815M823 218.500H836M757 218V230M827 214V234M830 222V232M813 247.500H824M811 271.500H832M837 258V264M829 270V256M884.500 205V241"/>
<path class="s c" d="M852 255L870 264M850 252L867 259M914 264L930 256M920 259L933 252M887 266.500H896M884 271.500H900M912 267.500H929M854 267.500H870M829 290V315M827 298V312M952 290V307M955 297V315"/>
<path class="s wh" d="M826 270L831 262M828 271L833 264M825 266h7M855 264L861 264M856 269L861 262M857 265l4 4"/>

<!-- legend and slopes -->
<path class="gr" d="M710.500 334.500h29v20h-29zM820.500 334.500H969.500V422.500H820.500zM820.500 425.500H981V605.500H820.500z"/>
<path class="gr w2" d="M981 426V605.500H820"/>
<path d="M716 339h10v10h-10z" fill="#0f0"/>
<path class="s" d="M728 348.500h5"/>
<g id="slopeRow"><path class="rd" d="M840 352.500H962"/><path class="rf" d="M840 352h28l-20 4h-8zM877 352h27v4h-6z"/><path class="rdash" d="M872.500 342V361"/><path class="s" d="M872.500 342v4M876 344.500H888M826 358.500H838M907 358.500H919M937 349.500H951M933 355.500H956"/></g>
<use href="#slopeRow" y="28"/><use href="#slopeRow" y="55"/>

<!-- notes -->
<path class="s note" d="M839 433H866M839 439H921M839 445H913M839 450H907M839 456H890M839 461.500H891M839 467H901M839 473H872M839 479H926M839 484H919M839 490H925M839 495.500H890M839 501.500H916M839 507.500H920M839 512.500H921M839 518.500H922M839 524H890M839 530H920M839 535.500H877M839 541H913M839 546.500H922M839 552.500H912M839 558H920M839 564H923M839 570H876M839 575H909M839 581.500H862M839 587H917M839 592.500H917M839 598H884"/>
<path class="s" d="M834 433h2M834 439h2M834 445h2M834 450h2M834 461.500h2M834 467h2M834 479h2M834 484h2M834 501.500h2M832 518.500h4M832 530h4M832 541h4M832 558h4M832 575h4M832 587h4"/>
</svg>
</section>
</div>
<svg class="callout" width="60" height="96" aria-hidden="true"><path d="M2 2L44 80" stroke="#f00" stroke-width="2"/><path d="M51 94L37 79L51 72z" fill="#f00"/></svg>
</main>
</body>
</html>
```

FILE: styles.css
```css
* { box-sizing: border-box; }
body { margin: 0; font: 11px/16px "Open Sans", "Noto Sans CJK KR", sans-serif; color: #222; background: #f0f0f0; }
button { border: 0; padding: 0; background: none; font: inherit; color: inherit; }
.defs { position: absolute; width: 0; height: 0; }
.app { display: flex; flex-direction: column; height: 100vh; overflow: hidden; position: relative; }
.bars { flex: none; overflow: hidden; background: #f0f0f1; }
.menu { display: flex; align-items: center; height: 23px; gap: 15px; }
.menu .grip { margin-right: -7px; }
.row { display: flex; align-items: center; height: 23px; gap: 8px; }
.row.low { height: 22px; }
.set { display: flex; align-items: center; flex: none; }
.grip { flex: none; width: 14px; height: 15px; padding: 0 5px 0 4px; background: conic-gradient(#b4b4b4 25%, transparent 0 50%, #b4b4b4 0 75%, transparent 0) 0 0 / 2px 2px content-box; }
.sep { flex: none; width: 1px; height: 18px; margin: 0 2px; background: #d2d2d4; }
.b { flex: none; width: 19px; height: 21px; display: grid; place-items: center; }
.b svg, .tree svg, .f svg { display: block; width: 16px; height: 16px; overflow: visible; }
.b.on { background: #e3f0fb; outline: 1px solid #3c96dd; outline-offset: -1px; }
.b.pale svg { background: #fafafa; }
.nav { fill: #bfe4fa; stroke: #386f9a; }
.snap { fill: none; stroke: #2c3f95; }
.b:disabled svg { fill: none; stroke: #d2d2d4; }
.more { flex: none; width: 10px; height: 16px; display: flex; flex-direction: column; align-items: center; justify-content: flex-end; gap: 1px; padding-bottom: 3px; }
.more::before { content: ""; width: 5px; height: 1px; background: #777; }
.more::after { content: ""; border: 3px solid transparent; border-top-color: #777; border-bottom: 0; }
.tag { font: bold 6px "Liberation Sans", sans-serif; fill: #222; }
.lc { font: bold 9px "Liberation Sans", sans-serif; fill: #fff; }
.pk { font: bold 6px "Liberation Sans", sans-serif; fill: #b0208a; }
.num { width: 62px; height: 19px; border: 1px solid #e4e4e6; padding: 0 4px; background: #fff; font: inherit; color: #6b4420; }
.drop { position: relative; width: 97px; }
.drop.wide { width: 217px; }
.drop select { appearance: none; width: 100%; height: 19px; border: 1px solid #e4e4e6; border-radius: 0; background: #fff; font: inherit; color: #222; padding: 0 16px 0 3px; display: block; }
.drop::after { content: ""; position: absolute; right: 4px; top: 8px; border: 3px solid transparent; border-top: 4px solid #666; border-bottom: 0; }

.work { flex: 1; display: flex; min-height: 0; }
.side { flex: none; width: 216px; display: flex; flex-direction: column; background: #f0f0f0; padding-right: 4px; }
.side-head { display: flex; align-items: center; gap: 8px; height: 18px; padding: 0 8px 0 2px; border-bottom: 1px solid #a0a0a0; }
.side-head h2 { margin: 0; font: inherit; }
.dots { flex: 1; height: 4px; margin: 0 -4px; background: conic-gradient(#c0c0c0 25%, transparent 0 50%, #c0c0c0 0 75%, transparent 0) 0 0 / 2px 2px; }
.side-head svg { display: block; }
.tree { flex: 1; margin: 0; padding: 0; list-style: none; background: #fcfaff; display: grid; grid-template-rows: repeat(3, 15px 16px 16px); align-content: start; min-height: 0; }
.tree li { display: flex; align-items: center; gap: 3px; }
.tree svg { width: 14px; height: 14px; }
.tree span { padding: 0 1px; line-height: 15px; }
.root { font-weight: bold; padding-left: 2px; }
.root svg { margin: 0 1px; }
.one { padding-left: 19px; }
.one svg { margin-left: 2px; }
.two { padding-left: 48px; }
.two span { background: #f0f0f0; padding-left: 2px; }
.x { width: 9px; height: 9px; margin-top: 2px; border: 1px solid #a8a8b0; background: linear-gradient(#446, #446) center / 5px 1px no-repeat #fff; }
.x.plus { background: linear-gradient(#446, #446) center / 5px 1px no-repeat, linear-gradient(#446, #446) center / 1px 5px no-repeat #fff; }
.split { flex: none; height: 6px; border-bottom: 1px solid #999; padding-left: 90px; background: #f0f0f0; }
.split i { display: block; width: 28px; height: 4px; background: #cbcbcb; }
.side-foot { flex: none; height: 26px; display: flex; justify-content: flex-end; }
.f { width: 19px; display: grid; place-items: center; }
.f svg { width: 15px; }
.f.on { background: #e5f1fb; outline: 1px solid #3c96dd; outline-offset: -1px; }
.canvas { flex: 1; min-width: 0; background: #000; overflow: hidden; }
.drawing { display: block; width: 100%; height: 100%; }
.drawing text { font-family: "Noto Sans CJK KR", sans-serif; white-space: pre; }
.drawing .title { font-size: 12px; fill: #fff; }
.mg text { font-size: 8px; font-weight: bold; fill: #d400dc; }
.nt { font-size: 8px; fill: #d400dc; }
.sc text { font: 7px "Liberation Sans", sans-serif; fill: #00d800; }
.frame { fill: none; stroke: #00e000; }
.gr { fill: none; stroke: #0c0; }
.rd, .tb { fill: none; stroke: #c41010; }
.cy { fill: none; stroke: #19d3dc; }
.w2 { stroke-width: 2; }
.rf { fill: #f00000; }
.rdash { fill: none; stroke: #d01010; stroke-dasharray: 3 1; }
.gd { stroke: #4c4; stroke-dasharray: 2 1; }
.s { fill: none; stroke: #0bc40b; stroke-width: 2; stroke-dasharray: 3 1 1 1 4 1 2 1; }
.s.note { stroke: #10b810; stroke-dasharray: 7 1 4 1 9 1 3 1 5 2; }
.s.c { stroke: #10bcc4; }
.s.wh { stroke: #fff; }
.callout { position: absolute; left: 113px; top: 536px; pointer-events: none; }
```
